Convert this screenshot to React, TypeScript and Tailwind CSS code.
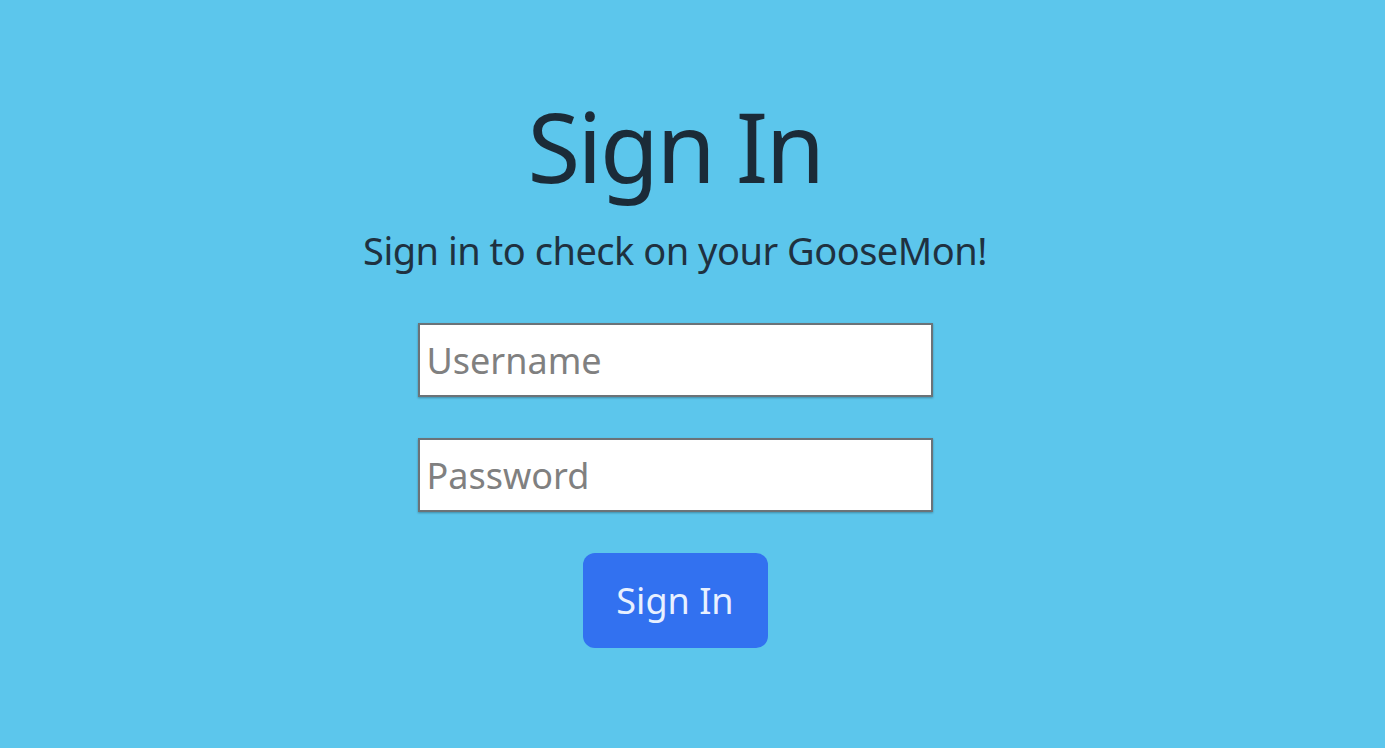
export default function App() {
  return (
    <div className="min-h-screen w-full bg-[#5cc6ec] pr-[35px] flex flex-col items-center font-['Noto_Sans',sans-serif]">
      <h1 className="mt-[90px] text-[96px] leading-[112px] text-[#1b2b38] tracking-[-2.5px]">Sign In</h1>
      <p className="mt-[24px] text-[38px] leading-[48px] text-[#1f3140] tracking-[-0.5px]">
        Sign in to check on your GooseMon!
      </p>
      <form className="mt-[49px] flex flex-col items-center">
        <input
          type="text"
          placeholder="Username"
          className="w-[515px] h-[74px] bg-white border-2 border-[#6b7378] shadow-[0_1px_2px_rgba(0,0,0,0.3)] px-[7px] text-[36px] text-[#333] placeholder:text-[#808080] outline-none"
        />
        <input
          type="password"
          placeholder="Password"
          className="mt-[41px] w-[515px] h-[74px] bg-white border-2 border-[#6b7378] shadow-[0_1px_2px_rgba(0,0,0,0.3)] px-[7px] text-[36px] text-[#333] placeholder:text-[#808080] outline-none"
        />
        <button
          type="button"
          className="mt-[41px] w-[185px] h-[95px] rounded-[12px] bg-[#3271f0] text-[36px] text-[#e8f0ff]"
        >
          Sign In
        </button>
      </form>
    </div>
  );
}
